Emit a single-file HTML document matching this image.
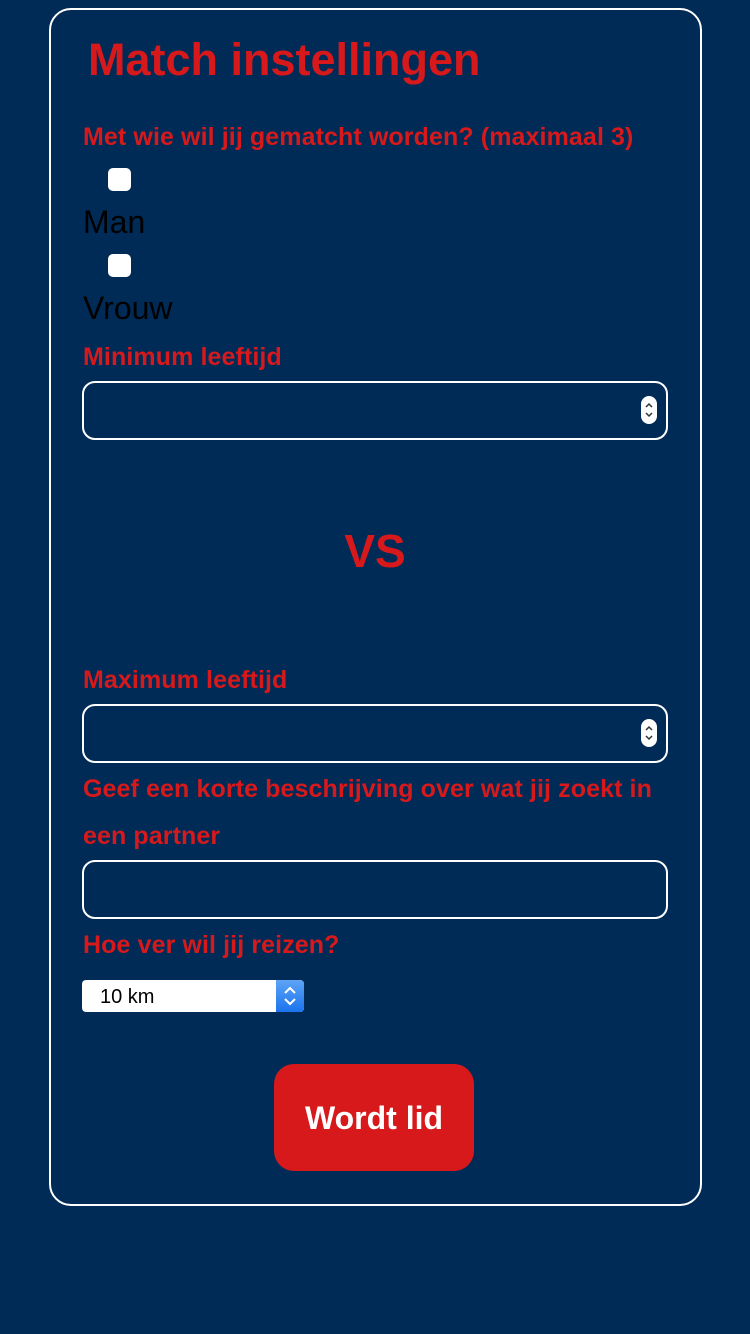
<!DOCTYPE html>
<html><head><meta charset="utf-8"><style>
*{margin:0;padding:0;box-sizing:border-box}
body{width:750px;height:1334px;background:#002b57;font-family:"Liberation Sans",sans-serif;position:relative;overflow:hidden}
.a{position:absolute;white-space:nowrap;line-height:1}
.card{position:absolute;left:49px;top:8px;width:653px;height:1198px;border:2px solid #fff;border-radius:22px}
.lbl{color:#d7191b;font-size:25px;left:83px;font-weight:bold;letter-spacing:0.1px}
.cb{position:absolute;left:108px;width:23px;height:23px;background:#fff;border-radius:5px}
.box{position:absolute;left:82px;width:586px;height:59px;border:2px solid #fff;border-radius:13px}
.sp{position:absolute;left:641px;width:16px;height:28px;background:#fff;border-radius:8px}
</style></head><body>
<div class="card"></div>
<div class="a" style="left:88px;top:37px;color:#d7191b;font-size:45px;font-weight:bold">Match instellingen</div>
<div class="a lbl" style="top:125px">Met wie wil jij gematcht worden? (maximaal 3)</div>
<div class="cb" style="top:168px"></div>
<div class="a" style="left:83px;top:206px;font-size:32px;color:#000">Man</div>
<div class="cb" style="top:254px"></div>
<div class="a" style="left:83px;top:292px;font-size:32px;color:#000">Vrouw</div>
<div class="a lbl" style="top:345px">Minimum leeftijd</div>
<div class="box" style="top:381px"></div>
<svg class="sp" style="top:396px" viewBox="0 0 16 28"><path d="M5 11l3-3 3 3M5 17l3 3 3-3" fill="none" stroke="#333" stroke-width="1.5"/></svg>
<div class="a" style="left:0;width:750px;text-align:center;top:528px;color:#d7191b;font-size:46px;font-weight:bold">VS</div>
<div class="a lbl" style="top:668px">Maximum leeftijd</div>
<div class="box" style="top:704px"></div>
<svg class="sp" style="top:719px" viewBox="0 0 16 28"><path d="M5 11l3-3 3 3M5 17l3 3 3-3" fill="none" stroke="#333" stroke-width="1.5"/></svg>
<div class="a lbl" style="top:777px">Geef een korte beschrijving over wat jij zoekt in</div>
<div class="a lbl" style="top:824px">een partner</div>
<div class="box" style="top:860px"></div>
<div class="a lbl" style="top:933px">Hoe ver wil jij reizen?</div>
<div style="position:absolute;left:82px;top:980px;width:222px;height:32px;background:#fff;border-radius:4px;overflow:hidden">
<div class="a" style="left:18px;top:7px;font-size:20px;color:#000">10 km</div>
<div style="position:absolute;right:0;top:0;width:28px;height:32px;background:linear-gradient(#5ea4f5,#1a73ee);border-radius:0 4px 4px 0"></div>
<svg style="position:absolute;right:0;top:0" width="28" height="32"><path d="M9 13l5-5 5 5M9 19l5 5 5-5" fill="none" stroke="#fff" stroke-width="2"/></svg>
</div>
<div style="position:absolute;left:274px;top:1064px;width:200px;height:107px;background:#d7191b;border-radius:20px"></div>
<div class="a" style="left:274px;width:200px;text-align:center;top:1102px;color:#fff;font-size:32px;font-weight:bold">Wordt lid</div>
</body></html>
